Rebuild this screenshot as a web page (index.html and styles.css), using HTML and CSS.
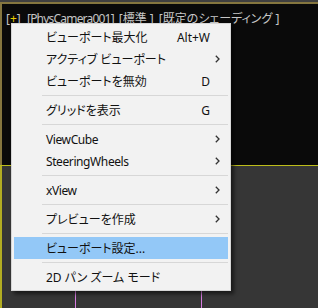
FILE: index.html
```html
<!DOCTYPE html>
<html>
<head>
  <title>Viewport Menu</title>
  <link rel="stylesheet" href="styles.css">
</head>
<body>
  <div class="app">
    <div class="top-strip"></div>
    <div class="vp-top">
      <div class="vp-label">
        <span class="tag tag-plus">[<span class="plus">+</span>]</span>
        <span class="tag tag-cam">[PhysCamera001]</span>
        <span class="tag">[標準 ]</span>
        <span class="tag">[既定のシェーディング ]</span>
      </div>
    </div>
    <div class="vp-bottom">
      <div class="vp-side"></div>
      <div class="vp-scene">
        <div class="grid-gap"></div>
        <div class="grid-col"></div>
        <div class="grid-col last"></div>
      </div>
    </div>

    <div class="ctx-menu">
      <div class="menu-item"><span class="label">ビューポート最大化</span><span class="key">Alt+W</span><span class="sub"></span></div>
      <div class="menu-item"><span class="label">アクティブ ビューポート</span><span class="key"></span><span class="sub"><svg width="5" height="8" viewBox="0 0 5 8"><polyline points="0.8,0.8 4,4 0.8,7.2" fill="none" stroke="#333" stroke-width="1.3"/></svg></span></div>
      <div class="menu-item"><span class="label">ビューポートを無効</span><span class="key">D</span><span class="sub"></span></div>
      <div class="menu-sep"></div>
      <div class="menu-item"><span class="label">グリッドを表示</span><span class="key">G</span><span class="sub"></span></div>
      <div class="menu-sep"></div>
      <div class="menu-item"><span class="label lat">ViewCube</span><span class="key"></span><span class="sub"><svg width="5" height="8" viewBox="0 0 5 8"><polyline points="0.8,0.8 4,4 0.8,7.2" fill="none" stroke="#333" stroke-width="1.3"/></svg></span></div>
      <div class="menu-item"><span class="label lat">SteeringWheels</span><span class="key"></span><span class="sub"><svg width="5" height="8" viewBox="0 0 5 8"><polyline points="0.8,0.8 4,4 0.8,7.2" fill="none" stroke="#333" stroke-width="1.3"/></svg></span></div>
      <div class="menu-sep"></div>
      <div class="menu-item"><span class="label lat">xView</span><span class="key"></span><span class="sub"><svg width="5" height="8" viewBox="0 0 5 8"><polyline points="0.8,0.8 4,4 0.8,7.2" fill="none" stroke="#333" stroke-width="1.3"/></svg></span></div>
      <div class="menu-sep"></div>
      <div class="menu-item"><span class="label">プレビューを作成</span><span class="key"></span><span class="sub"><svg width="5" height="8" viewBox="0 0 5 8"><polyline points="0.8,0.8 4,4 0.8,7.2" fill="none" stroke="#333" stroke-width="1.3"/></svg></span></div>
      <div class="menu-sep"></div>
      <div class="menu-item active"><span class="label">ビューポート設定...</span><span class="key"></span><span class="sub"></span></div>
      <div class="menu-sep"></div>
      <div class="menu-item"><span class="label">2D パン ズーム モード</span><span class="key"></span><span class="sub"></span></div>
    </div>
  </div>
</body>
</html>
```

FILE: styles.css
```css
body {
  margin: 0;
  background-color: #353535;
  font-family: "Noto Sans", "Noto Sans CJK JP", sans-serif;
}

.app {
  position: relative;
  width: 318px;
  height: 308px;
  overflow: hidden;
  display: flex;
  flex-direction: column;
  background-color: #363636;
}

.top-strip {
  height: 2px;
  background-color: #404040;
}

.vp-top {
  height: 161px;
  background-color: #0a0a0a;
  border-top: 2px solid #85763f;
  border-left: 2px solid #85763f;
}

.vp-label {
  display: flex;
  gap: 5px;
  padding: 8px 0 0 4px;
  font-size: 12px;
  line-height: 14px;
  color: #c6c6c6;
  white-space: nowrap;
  font-feature-settings: "palt";
}

.tag-plus {
  width: 14px;
  display: flex;
  justify-content: space-between;
  margin-right: 2px;
}

.tag-cam {
  letter-spacing: -0.8px;
}

.plus {
  color: #e6cf00;
}

.vp-bottom {
  flex: 1;
  display: flex;
  border-top: 1px solid #bdbd1a;
}

.vp-side {
  width: 53px;
  background-color: #7f7f68;
  border-left: 2px solid #b2ad22;
}

.vp-scene {
  flex: 1;
  display: flex;
  background-color: #363636;
}

.grid-gap {
  width: 73px;
}

.grid-col {
  width: 125px;
  border-left: 1px solid #d77ce0;
}

.grid-col.last {
  flex: 1;
}

/* context menu floats over the viewport */
.ctx-menu {
  position: absolute;
  left: 11px;
  top: 23px;
  width: 220px;
  box-sizing: border-box;
  padding: 2px;
  background-color: #f2f2f2;
  border: 1px solid #d6d6d6;
  box-shadow: 3px 3px 4px rgba(0, 0, 0, 0.55);
  font-size: 12px;
  color: #111;
  font-feature-settings: "palt";
}

.menu-item {
  display: flex;
  align-items: center;
  height: 22px;
  padding-left: 32px;
}

.menu-item.active {
  background-color: #93c8f7;
}

.menu-item .label {
  flex: 1;
  white-space: nowrap;
}

.menu-item .lat {
  letter-spacing: -0.4px;
}

.menu-item .key {
  text-align: right;
}

.menu-item .sub {
  width: 18px;
  display: flex;
  align-items: center;
  padding-left: 5px;
  box-sizing: border-box;
}

.menu-sep {
  height: 1px;
  margin: 3px 0 3px 28px;
  background-color: #d7d7d7;
}
```
